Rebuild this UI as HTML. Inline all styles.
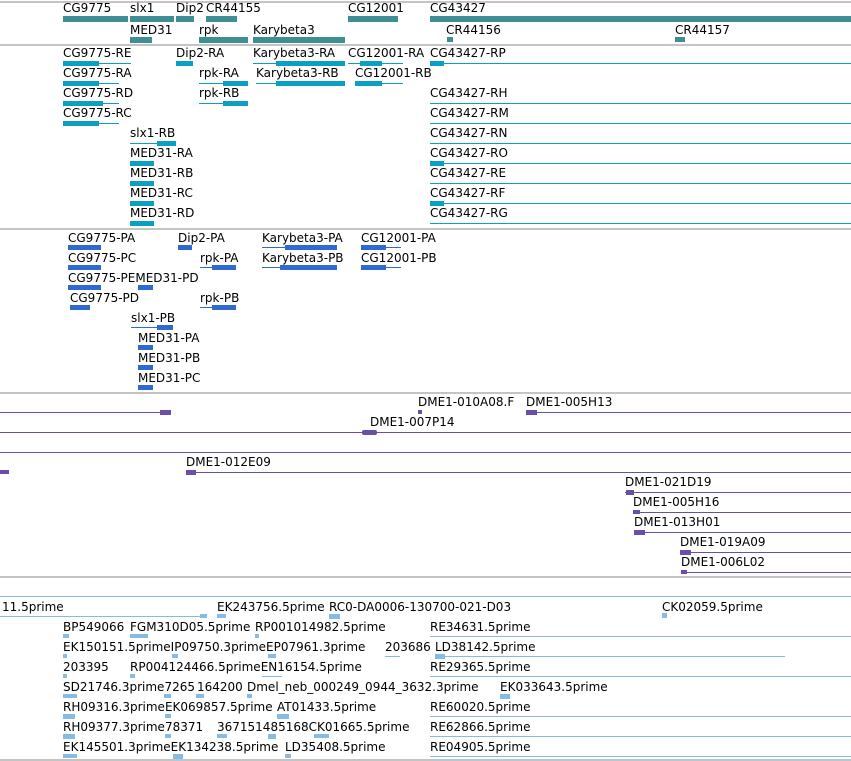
<!DOCTYPE html>
<html><head><meta charset="utf-8"><style>
body{margin:0;width:851px;height:761px;background:#fff;position:relative;overflow:hidden;font-family:"DejaVu Sans","Liberation Sans",sans-serif}
.t{position:absolute;font-size:12px;line-height:12px;color:#000;white-space:nowrap}
.g{position:absolute;left:0;width:851px;height:2px;background:#c4c4c4}
.r{position:absolute}
.G{background:#3e8f93}.T{background:#0aa0c4}.C{background:#2e6ad2}.P{background:#6b4ea8}.L{background:#86bce4}
</style></head><body>
<div class="g" style="top:1px"></div>
<div class="g" style="top:44px"></div>
<div class="g" style="top:228px"></div>
<div class="g" style="top:392px"></div>
<div class="g" style="top:576px"></div>
<div class="r L" style="top:596px;left:0;width:851px;height:1px"></div>
<div class="g" style="top:759px"></div>

<!-- genes -->
<div class="t" style="left:63px;top:2px">CG9775</div>
<div class="t" style="left:130px;top:2px">slx1</div>
<div class="t" style="left:176px;top:2px">Dip2</div>
<div class="t" style="left:206px;top:2px">CR44155</div>
<div class="t" style="left:348px;top:2px">CG12001</div>
<div class="t" style="left:430px;top:2px">CG43427</div>
<div class="r G" style="left:63px;top:16px;width:65px;height:6px"></div>
<div class="r G" style="left:130px;top:16px;width:44px;height:6px"></div>
<div class="r G" style="left:176px;top:16px;width:18px;height:6px"></div>
<div class="r G" style="left:206px;top:16px;width:31px;height:6px"></div>
<div class="r G" style="left:348px;top:16px;width:50px;height:6px"></div>
<div class="r G" style="left:430px;top:16px;width:421px;height:6px"></div>
<div class="t" style="left:130px;top:24px">MED31</div>
<div class="t" style="left:199px;top:24px">rpk</div>
<div class="t" style="left:253px;top:24px">Karybeta3</div>
<div class="t" style="left:446px;top:24px">CR44156</div>
<div class="t" style="left:675px;top:24px">CR44157</div>
<div class="r G" style="left:130px;top:37px;width:22px;height:6px"></div>
<div class="r G" style="left:199px;top:37px;width:49px;height:6px"></div>
<div class="r G" style="left:253px;top:37px;width:92px;height:6px"></div>
<div class="r G" style="left:447px;top:37px;width:6px;height:5px"></div>
<div class="r G" style="left:675px;top:37px;width:10px;height:5px"></div>

<!-- transcripts -->
<div class="t" style="left:63px;top:47px">CG9775-RE</div>
<div class="t" style="left:176px;top:47px">Dip2-RA</div>
<div class="t" style="left:253px;top:47px">Karybeta3-RA</div>
<div class="t" style="left:348px;top:47px">CG12001-RA</div>
<div class="t" style="left:430px;top:47px">CG43427-RP</div>
<div class="t" style="left:63px;top:67px">CG9775-RA</div>
<div class="t" style="left:199px;top:67px">rpk-RA</div>
<div class="t" style="left:256px;top:67px">Karybeta3-RB</div>
<div class="t" style="left:355px;top:67px">CG12001-RB</div>
<div class="t" style="left:63px;top:87px">CG9775-RD</div>
<div class="t" style="left:199px;top:87px">rpk-RB</div>
<div class="t" style="left:63px;top:107px">CG9775-RC</div>
<div class="t" style="left:130px;top:127px">slx1-RB</div>
<div class="t" style="left:130px;top:147px">MED31-RA</div>
<div class="t" style="left:130px;top:167px">MED31-RB</div>
<div class="t" style="left:130px;top:187px">MED31-RC</div>
<div class="t" style="left:130px;top:207px">MED31-RD</div>
<div class="t" style="left:430px;top:87px">CG43427-RH</div>
<div class="t" style="left:430px;top:107px">CG43427-RM</div>
<div class="t" style="left:430px;top:127px">CG43427-RN</div>
<div class="t" style="left:430px;top:147px">CG43427-RO</div>
<div class="t" style="left:430px;top:167px">CG43427-RE</div>
<div class="t" style="left:430px;top:187px">CG43427-RF</div>
<div class="t" style="left:430px;top:207px">CG43427-RG</div>
<!-- transcript features -->
<div class="r T" style="left:63px;top:63px;width:68px;height:1px"></div>
<div class="r T" style="left:63px;top:61px;width:36px;height:5px"></div>
<div class="r T" style="left:176px;top:61px;width:17px;height:5px"></div>
<div class="r T" style="left:253px;top:63px;width:92px;height:1px"></div>
<div class="r T" style="left:276px;top:61px;width:69px;height:5px"></div>
<div class="r T" style="left:348px;top:63px;width:55px;height:1px"></div>
<div class="r T" style="left:360px;top:61px;width:22px;height:5px"></div>
<div class="r T" style="left:63px;top:83px;width:56px;height:1px"></div>
<div class="r T" style="left:63px;top:81px;width:36px;height:5px"></div>
<div class="r T" style="left:199px;top:83px;width:49px;height:1px"></div>
<div class="r T" style="left:223px;top:81px;width:25px;height:5px"></div>
<div class="r T" style="left:256px;top:83px;width:89px;height:1px"></div>
<div class="r T" style="left:276px;top:81px;width:69px;height:5px"></div>
<div class="r T" style="left:355px;top:83px;width:48px;height:1px"></div>
<div class="r T" style="left:355px;top:81px;width:27px;height:5px"></div>
<div class="r T" style="left:63px;top:103px;width:56px;height:1px"></div>
<div class="r T" style="left:63px;top:101px;width:40px;height:5px"></div>
<div class="r T" style="left:199px;top:103px;width:49px;height:1px"></div>
<div class="r T" style="left:223px;top:101px;width:25px;height:5px"></div>
<div class="r T" style="left:63px;top:123px;width:56px;height:1px"></div>
<div class="r T" style="left:63px;top:121px;width:36px;height:5px"></div>
<div class="r T" style="left:130px;top:143px;width:46px;height:1px"></div>
<div class="r T" style="left:157px;top:141px;width:19px;height:5px"></div>
<div class="r T" style="left:130px;top:161px;width:24px;height:5px"></div>
<div class="r T" style="left:130px;top:181px;width:24px;height:5px"></div>
<div class="r T" style="left:130px;top:201px;width:24px;height:5px"></div>
<div class="r T" style="left:130px;top:221px;width:24px;height:5px"></div>
<div class="r T" style="left:430px;top:63px;width:421px;height:1px"></div>
<div class="r T" style="left:430px;top:61px;width:14px;height:5px"></div>
<div class="r T" style="left:430px;top:103px;width:421px;height:1px"></div>
<div class="r T" style="left:430px;top:123px;width:421px;height:1px"></div>
<div class="r T" style="left:430px;top:143px;width:421px;height:1px"></div>
<div class="r T" style="left:430px;top:163px;width:421px;height:1px"></div>
<div class="r T" style="left:430px;top:161px;width:14px;height:5px"></div>
<div class="r T" style="left:430px;top:183px;width:421px;height:1px"></div>
<div class="r T" style="left:430px;top:203px;width:421px;height:1px"></div>
<div class="r T" style="left:430px;top:201px;width:14px;height:5px"></div>
<div class="r T" style="left:430px;top:223px;width:421px;height:1px"></div>

<!-- CDS -->
<div class="t" style="left:68px;top:232px">CG9775-PA</div>
<div class="t" style="left:178px;top:232px">Dip2-PA</div>
<div class="t" style="left:262px;top:232px">Karybeta3-PA</div>
<div class="t" style="left:361px;top:232px">CG12001-PA</div>
<div class="t" style="left:68px;top:252px">CG9775-PC</div>
<div class="t" style="left:200px;top:252px">rpk-PA</div>
<div class="t" style="left:262px;top:252px">Karybeta3-PB</div>
<div class="t" style="left:361px;top:252px">CG12001-PB</div>
<div class="t" style="left:68px;top:272px">CG9775-PEMED31-PD</div>
<div class="t" style="left:70px;top:292px">CG9775-PD</div>
<div class="t" style="left:200px;top:292px">rpk-PB</div>
<div class="t" style="left:131px;top:312px">slx1-PB</div>
<div class="t" style="left:138px;top:332px">MED31-PA</div>
<div class="t" style="left:138px;top:352px">MED31-PB</div>
<div class="t" style="left:138px;top:372px">MED31-PC</div>
<div class="r C" style="left:68px;top:245px;width:33px;height:5px"></div>
<div class="r C" style="left:178px;top:245px;width:14px;height:5px"></div>
<div class="r C" style="left:262px;top:247px;width:75px;height:1px"></div>
<div class="r C" style="left:285px;top:245px;width:52px;height:5px"></div>
<div class="r C" style="left:361px;top:247px;width:40px;height:1px"></div>
<div class="r C" style="left:361px;top:245px;width:25px;height:5px"></div>
<div class="r C" style="left:68px;top:265px;width:33px;height:5px"></div>
<div class="r C" style="left:200px;top:267px;width:36px;height:1px"></div>
<div class="r C" style="left:212px;top:265px;width:24px;height:5px"></div>
<div class="r C" style="left:262px;top:267px;width:75px;height:1px"></div>
<div class="r C" style="left:280px;top:265px;width:57px;height:5px"></div>
<div class="r C" style="left:361px;top:267px;width:40px;height:1px"></div>
<div class="r C" style="left:361px;top:265px;width:25px;height:5px"></div>
<div class="r C" style="left:68px;top:285px;width:33px;height:5px"></div>
<div class="r C" style="left:138px;top:285px;width:15px;height:5px"></div>
<div class="r C" style="left:70px;top:305px;width:20px;height:5px"></div>
<div class="r C" style="left:200px;top:307px;width:36px;height:1px"></div>
<div class="r C" style="left:212px;top:305px;width:24px;height:5px"></div>
<div class="r C" style="left:131px;top:327px;width:42px;height:1px"></div>
<div class="r C" style="left:157px;top:325px;width:16px;height:5px"></div>
<div class="r C" style="left:138px;top:345px;width:15px;height:5px"></div>
<div class="r C" style="left:138px;top:365px;width:15px;height:5px"></div>
<div class="r C" style="left:138px;top:385px;width:15px;height:5px"></div>

<!-- purple -->
<div class="t" style="left:418px;top:396px">DME1-010A08.F</div>
<div class="t" style="left:526px;top:396px">DME1-005H13</div>
<div class="t" style="left:370px;top:416px">DME1-007P14</div>
<div class="t" style="left:186px;top:456px">DME1-012E09</div>
<div class="t" style="left:625px;top:476px">DME1-021D19</div>
<div class="t" style="left:633px;top:496px">DME1-005H16</div>
<div class="t" style="left:634px;top:516px">DME1-013H01</div>
<div class="t" style="left:680px;top:536px">DME1-019A09</div>
<div class="t" style="left:681px;top:556px">DME1-006L02</div>
<div class="r P" style="left:0;top:412px;width:165px;height:1px"></div>
<div class="r P" style="left:160px;top:410px;width:11px;height:5px"></div>
<div class="r P" style="left:418px;top:410px;width:4px;height:4px"></div>
<div class="r P" style="left:526px;top:412px;width:325px;height:1px"></div>
<div class="r P" style="left:526px;top:410px;width:11px;height:5px"></div>
<div class="r P" style="left:0;top:432px;width:851px;height:1px"></div>
<div class="r P" style="left:362px;top:430px;width:15px;height:5px;border-radius:2px"></div>
<div class="r P" style="left:0;top:452px;width:851px;height:1px"></div>
<div class="r P" style="left:0;top:470px;width:9px;height:4px"></div>
<div class="r P" style="left:186px;top:472px;width:665px;height:1px"></div>
<div class="r P" style="left:186px;top:470px;width:10px;height:5px"></div>
<div class="r P" style="left:625px;top:492px;width:226px;height:1px"></div>
<div class="r P" style="left:626px;top:490px;width:8px;height:5px"></div>
<div class="r P" style="left:633px;top:512px;width:218px;height:1px"></div>
<div class="r P" style="left:633px;top:510px;width:7px;height:4px"></div>
<div class="r P" style="left:634px;top:532px;width:217px;height:1px"></div>
<div class="r P" style="left:634px;top:530px;width:11px;height:5px"></div>
<div class="r P" style="left:680px;top:552px;width:171px;height:1px"></div>
<div class="r P" style="left:680px;top:550px;width:11px;height:5px"></div>
<div class="r P" style="left:681px;top:572px;width:170px;height:1px"></div>
<div class="r P" style="left:681px;top:570px;width:6px;height:4px"></div>

<!-- light blue ESTs -->
<div class="t" style="left:2px;top:601px">11.5prime</div>
<div class="t" style="left:217px;top:601px">EK243756.5prime</div>
<div class="t" style="left:329px;top:601px">RC0-DA0006-130700-021-D03</div>
<div class="t" style="left:662px;top:601px">CK02059.5prime</div>
<div class="t" style="left:63px;top:621px">BP549066</div>
<div class="t" style="left:130px;top:621px">FGM310D05.5prime</div>
<div class="t" style="left:255px;top:621px">RP001014982.5prime</div>
<div class="t" style="left:430px;top:621px">RE34631.5prime</div>
<div class="t" style="left:63px;top:641px">EK150151.5primeIP09750.3primeEP07961.3prime</div>
<div class="t" style="left:385px;top:641px">203686</div>
<div class="t" style="left:435px;top:641px">LD38142.5prime</div>
<div class="t" style="left:63px;top:661px">203395</div>
<div class="t" style="left:130px;top:661px">RP004124466.5primeEN16154.5prime</div>
<div class="t" style="left:430px;top:661px">RE29365.5prime</div>
<div class="t" style="left:63px;top:681px">SD21746.3prime7265</div>
<div class="t" style="left:197px;top:681px">164200</div>
<div class="t" style="left:247px;top:681px">Dmel_neb_000249_0944_3632.3prime</div>
<div class="t" style="left:500px;top:681px">EK033643.5prime</div>
<div class="t" style="left:63px;top:701px">RH09316.3primeEK069857.5prime</div>
<div class="t" style="left:277px;top:701px">AT01433.5prime</div>
<div class="t" style="left:430px;top:701px">RE60020.5prime</div>
<div class="t" style="left:63px;top:721px">RH09377.3prime78371</div>
<div class="t" style="left:217px;top:721px">367151485168CK01665.5prime</div>
<div class="t" style="left:430px;top:721px">RE62866.5prime</div>
<div class="t" style="left:63px;top:741px">EK145501.3primeEK134238.5prime</div>
<div class="t" style="left:285px;top:741px">LD35408.5prime</div>
<div class="t" style="left:430px;top:741px">RE04905.5prime</div>

<div class="r L" style="left:0;top:616px;width:205px;height:1px"></div>
<div class="r L" style="left:200px;top:614px;width:7px;height:4px"></div>
<div class="r L" style="left:217px;top:614px;width:9px;height:4px"></div>
<div class="r L" style="left:329px;top:614px;width:11px;height:5px"></div>
<div class="r L" style="left:662px;top:613px;width:5px;height:5px"></div>
<div class="r L" style="left:63px;top:634px;width:6px;height:4px"></div>
<div class="r L" style="left:130px;top:634px;width:18px;height:4px"></div>
<div class="r L" style="left:255px;top:634px;width:4px;height:4px"></div>
<div class="r L" style="left:430px;top:636px;width:421px;height:1px"></div>
<div class="r L" style="left:63px;top:654px;width:4px;height:4px"></div>
<div class="r L" style="left:172px;top:654px;width:6px;height:4px"></div>
<div class="r L" style="left:268px;top:654px;width:8px;height:4px"></div>
<div class="r L" style="left:385px;top:656px;width:15px;height:1px"></div>
<div class="r L" style="left:435px;top:656px;width:350px;height:1px"></div>
<div class="r L" style="left:435px;top:654px;width:10px;height:5px"></div>
<div class="r L" style="left:63px;top:674px;width:4px;height:4px"></div>
<div class="r L" style="left:130px;top:674px;width:5px;height:4px"></div>
<div class="r L" style="left:262px;top:676px;width:20px;height:1px"></div>
<div class="r L" style="left:430px;top:676px;width:421px;height:1px"></div>
<div class="r L" style="left:63px;top:694px;width:14px;height:4px"></div>
<div class="r L" style="left:164px;top:694px;width:7px;height:4px"></div>
<div class="r L" style="left:196px;top:694px;width:8px;height:4px"></div>
<div class="r L" style="left:247px;top:694px;width:5px;height:4px"></div>
<div class="r L" style="left:500px;top:694px;width:10px;height:5px"></div>
<div class="r L" style="left:63px;top:714px;width:12px;height:5px"></div>
<div class="r L" style="left:165px;top:714px;width:6px;height:4px"></div>
<div class="r L" style="left:277px;top:714px;width:12px;height:5px"></div>
<div class="r L" style="left:430px;top:716px;width:421px;height:1px"></div>
<div class="r L" style="left:63px;top:734px;width:12px;height:5px"></div>
<div class="r L" style="left:165px;top:734px;width:6px;height:4px"></div>
<div class="r L" style="left:217px;top:734px;width:10px;height:4px"></div>
<div class="r L" style="left:268px;top:734px;width:8px;height:5px"></div>
<div class="r L" style="left:314px;top:734px;width:15px;height:4px"></div>
<div class="r L" style="left:430px;top:736px;width:421px;height:1px"></div>
<div class="r L" style="left:63px;top:754px;width:14px;height:4px"></div>
<div class="r L" style="left:173px;top:754px;width:10px;height:5px"></div>
<div class="r L" style="left:285px;top:754px;width:6px;height:4px"></div>
<div class="r L" style="left:430px;top:756px;width:421px;height:1px"></div>
</body></html>
